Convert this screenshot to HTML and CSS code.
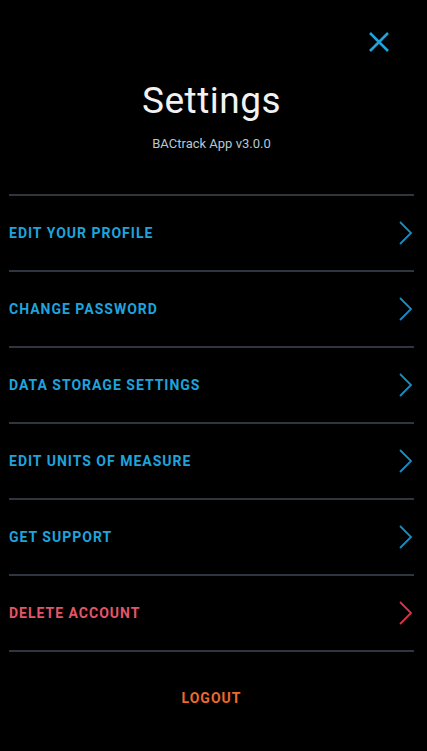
FILE: index.html
```html
<!DOCTYPE html>
<html lang="en">

<head>
    <meta charset="UTF-8">
    <meta name="viewport" content="width=device-width, initial-scale=1.0">
    <link rel="stylesheet" href="styles.css">
    <title>Settings</title>
</head>

<body>
    <div class="screen">
        <div class="topBar">
            <svg class="closeIcon" width="22" height="22" viewBox="0 0 22 22">
                <path d="M2 2 L20 20 M20 2 L2 20" stroke="#1fa3dc" stroke-width="2.6" fill="none" />
            </svg>
        </div>
        <h1 class="title">Settings</h1>
        <p class="version">BACtrack App v3.0.0</p>

        <ul class="menu">
            <li class="menuItem">
                <span>EDIT YOUR PROFILE</span>
                <svg class="chevron" width="16" height="26" viewBox="0 0 16 26">
                    <path d="M2 2 L13 13 L2 24" stroke="#1a8cc4" stroke-width="1.8" fill="none" />
                </svg>
            </li>
            <li class="menuItem">
                <span>CHANGE PASSWORD</span>
                <svg class="chevron" width="16" height="26" viewBox="0 0 16 26">
                    <path d="M2 2 L13 13 L2 24" stroke="#1a8cc4" stroke-width="1.8" fill="none" />
                </svg>
            </li>
            <li class="menuItem">
                <span>DATA STORAGE SETTINGS</span>
                <svg class="chevron" width="16" height="26" viewBox="0 0 16 26">
                    <path d="M2 2 L13 13 L2 24" stroke="#1a8cc4" stroke-width="1.8" fill="none" />
                </svg>
            </li>
            <li class="menuItem">
                <span>EDIT UNITS OF MEASURE</span>
                <svg class="chevron" width="16" height="26" viewBox="0 0 16 26">
                    <path d="M2 2 L13 13 L2 24" stroke="#1a8cc4" stroke-width="1.8" fill="none" />
                </svg>
            </li>
            <li class="menuItem">
                <span>GET SUPPORT</span>
                <svg class="chevron" width="16" height="26" viewBox="0 0 16 26">
                    <path d="M2 2 L13 13 L2 24" stroke="#1a8cc4" stroke-width="1.8" fill="none" />
                </svg>
            </li>
            <li class="menuItem danger">
                <span>DELETE ACCOUNT</span>
                <svg class="chevron" width="16" height="26" viewBox="0 0 16 26">
                    <path d="M2 2 L13 13 L2 24" stroke="#d9344a" stroke-width="1.8" fill="none" />
                </svg>
            </li>
        </ul>

        <p class="logout">LOGOUT</p>
    </div>
</body>

</html>
```

FILE: styles.css
```css
html,
body {
    margin: 0;
    background-color: #000;
}

body {
    font-family: Roboto, "Liberation Sans", sans-serif;
}

.screen {
    width: 427px;
    height: 751px;
    padding: 0 13px 0 9px;
    box-sizing: border-box;
    display: flex;
    flex-direction: column;
}

.topBar {
    display: flex;
    justify-content: flex-end;
    padding: 31px 24px 0 0;
    height: 22px;
}

.title {
    margin: 26px 0 0;
    text-align: center;
    color: #f2f2f2;
    font-weight: 400;
    font-size: 37px;
    line-height: 44px;
    letter-spacing: 0.5px;
}

.version {
    margin: 13px 0 0;
    text-align: center;
    color: #b4c8d6;
    font-size: 13px;
    line-height: 16px;
}

.menu {
    list-style: none;
    margin: 42px 0 0;
    padding: 0;
    border-top: 2px solid #2e373f;
}

.menuItem {
    height: 74px;
    border-bottom: 2px solid #2e373f;
    display: flex;
    align-items: center;
    justify-content: space-between;
    color: #1fa3dc;
    font-weight: 700;
    font-size: 14px;
    letter-spacing: 1px;
}

.menuItem.danger {
    color: #e25668;
}

.logout {
    margin: 38px 0 0;
    text-align: center;
    color: #ec6a2c;
    font-weight: 700;
    font-size: 14px;
    letter-spacing: 1px;
}
```
